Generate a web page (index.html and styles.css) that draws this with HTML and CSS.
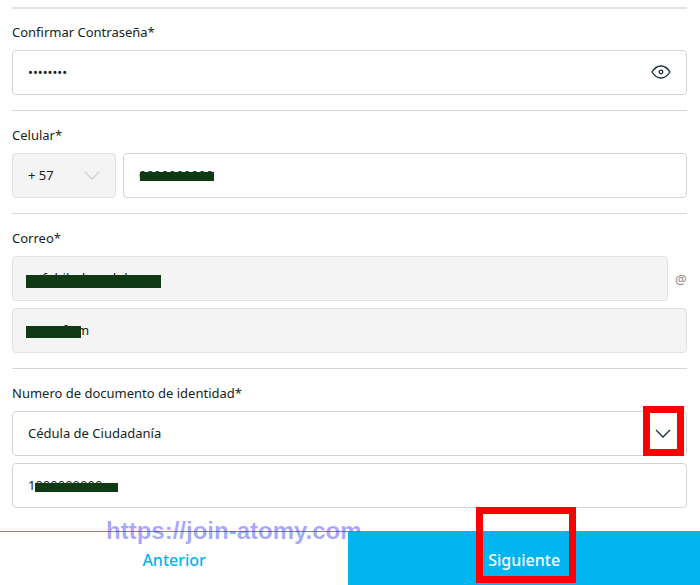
FILE: index.html
```html
<!DOCTYPE html>
<html lang="es">
<head>
    <meta charset="UTF-8">
    <meta name="viewport" content="width=device-width, initial-scale=1.0">
    <title>Registro</title>
    <link rel="stylesheet" href="styles.css">
</head>
<body>

    <form class="register-form">
        <div class="section">
            <label for="confirm">Confirmar Contraseña*</label>
            <div class="field">
                <input type="password" id="confirm" value="password">
                <button type="button" class="eye" aria-label="Mostrar contraseña">
                    <svg width="20" height="16" viewBox="0 0 20 16" fill="none" stroke="#14303a" stroke-width="1.3">
                        <path d="M1 8C3.500 4 6.500 2 10 2S16.500 4 19 8C16.500 12 13.500 14 10 14S3.500 12 1 8Z"/>
                        <circle cx="10" cy="8" r="1.8"/>
                    </svg>
                </button>
            </div>
        </div>

        <div class="section">
            <label for="phone">Celular*</label>
            <div class="row">
                <div class="field prefix">
                    <select id="prefix" aria-label="Prefijo" disabled>
                        <option>+ 57</option>
                    </select>
                    <svg class="chevron light" width="16" height="10" viewBox="0 0 16 10" fill="none"><path d="M1 1l7 7 7-7"/></svg>
                </div>
                <div class="field">
                    <input type="tel" id="phone" value="0000000000">
                    <span class="mask mask-phone"></span>
                </div>
            </div>
        </div>

        <div class="section">
            <label for="email">Correo*</label>
            <div class="row">
                <div class="field">
                    <input type="text" id="email" value="usfobilodoandob" disabled>
                    <span class="mask mask-email"></span>
                </div>
                <span class="at">@</span>
            </div>
            <div class="field">
                <input type="text" aria-label="Dominio" value="xxxxxf.xm" disabled>
                <span class="mask mask-domain"></span>
            </div>
        </div>

        <div class="section">
            <label for="doctype">Numero de documento de identidad*</label>
            <div class="field">
                <select id="doctype">
                    <option>Cédula de Ciudadanía</option>
                </select>
                <svg class="chevron" width="16" height="10" viewBox="0 0 16 10" fill="none"><path d="M1 1l7 7 7-7"/></svg>
                <span class="highlight highlight-select"></span>
            </div>
            <div class="field">
                <input type="text" aria-label="Numero de documento" value="1000000000">
                <span class="mask mask-doc"></span>
            </div>
        </div>
    </form>

    <div class="footer">
        <span class="watermark">https://join-atomy.com</span>
        <button type="button" class="prev">Anterior</button>
        <button type="button" class="next">Siguiente<span class="highlight highlight-next"></span></button>
    </div>

</body>
</html>
```
FILE: styles.css
```css
* {
    box-sizing: border-box;
}

body {
    margin: 0;
    background-color: #fff;
    color: #14241c;
    font-family: "Noto Sans", sans-serif;
    font-size: 13px;
}

.register-form {
    padding: 7px 13px 0 12px;
}

.section {
    display: flex;
    flex-direction: column;
    gap: 7px;
    border-top: 1px solid #d6d6d6;
    padding: 14px 0 15px;
}

.section:first-child {
    border-top: 2px solid #e4e4e4;
    padding-top: 13px;
}

.section label {
    line-height: 20px;
    padding-bottom: 1px;
}

.row {
    display: flex;
    align-items: center;
    gap: 7px;
}

.field {
    position: relative;
    flex: 1;
}

.prefix {
    flex: 0 0 104px;
}

.field input,
.field select {
    display: block;
    width: 100%;
    height: 45px;
    padding: 0 15px 2px;
    border: 1px solid #d4d4d4;
    border-radius: 4px;
    background-color: #fff;
    color: #14241c;
    font-family: inherit;
    font-size: 13px;
    appearance: none;
    opacity: 1;
}

.field input:disabled,
.field select:disabled {
    background-color: #f4f4f4;
    border-color: #e2e2e2;
}

.eye {
    position: absolute;
    top: 14px;
    right: 16px;
    display: flex;
    padding: 0;
    border: none;
    background: none;
    cursor: pointer;
}

.chevron {
    position: absolute;
    top: 18px;
    right: 16px;
    stroke: #14303a;
    stroke-width: 1.3;
    pointer-events: none;
}

.chevron.light {
    stroke: #d0d0d0;
}

.at {
    width: 12px;
    color: #888;
}

/* Hidden personal data */
.mask {
    position: absolute;
    background-color: #0f3a14;
}

.mask-phone {
    top: 19px;
    left: 17px;
    width: 74px;
    height: 9px;
}

.mask-email {
    top: 19px;
    left: 14px;
    width: 135px;
    height: 13px;
}

.mask-domain {
    top: 18px;
    left: 14px;
    width: 55px;
    height: 12px;
}

.mask-doc {
    top: 20px;
    left: 23px;
    width: 83px;
    height: 9px;
}

/* Red marks */
.highlight {
    position: absolute;
    border: 7px solid #f00;
    pointer-events: none;
}

.highlight-select {
    top: -5px;
    right: 3px;
    width: 41px;
    height: 50px;
}

.highlight-next {
    top: -25px;
    left: calc(50% - 48px);
    width: 100px;
    height: 76px;
}

.footer {
    position: relative;
    display: flex;
    margin-top: 8px;
    border-top: 1px solid #00b5f0;
}

.footer button {
    position: relative;
    flex: 1;
    height: 53px;
    padding: 3px 0 0;
    border: none;
    background: none;
    color: #00b5f0;
    font-family: inherit;
    font-size: 16px;
    font-weight: 500;
    cursor: pointer;
}

.footer .next {
    flex-grow: 1.01;
    background-color: #00b5f0;
    color: #fff;
}

.watermark {
    position: absolute;
    top: -15px;
    left: 106px;
    color: rgba(0, 0, 255, 0.35);
    font-family: "Liberation Sans", sans-serif;
    font-size: 24px;
    font-weight: bold;
    line-height: 28px;
}
```
